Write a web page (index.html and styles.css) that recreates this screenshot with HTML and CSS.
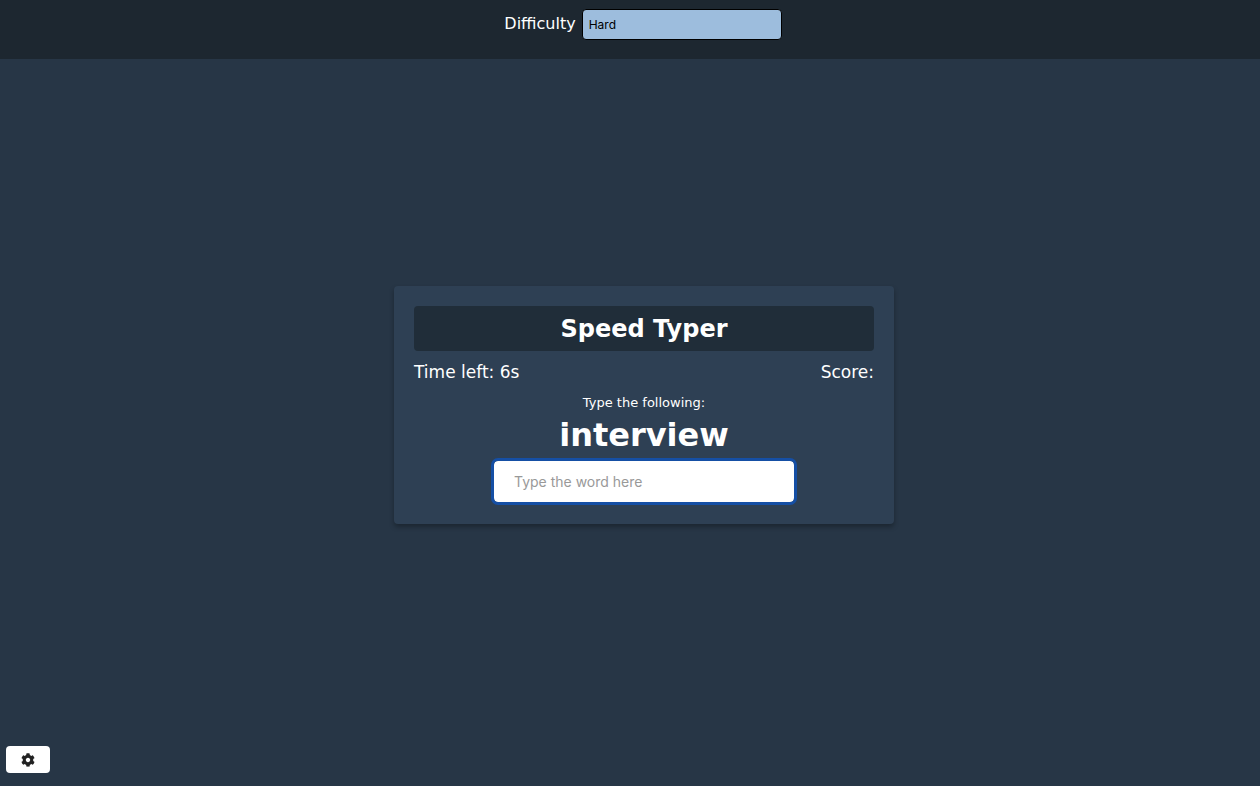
FILE: index.html
```
<!DOCTYPE html>
<html lang="en">
<head>
<meta charset="utf-8">
<title>Speed Typer</title>
<link rel="stylesheet" href="styles.css">
</head>
<body>
<header class="settings">
  <form class="settings-form">
    <label for="difficulty">Difficulty</label>
    <select id="difficulty" class="difficulty">
      <option>Easy</option>
      <option>Medium</option>
      <option selected>Hard</option>
    </select>
  </form>
</header>
<main class="stage">
  <section class="card">
    <h1 class="title">Speed Typer</h1>
    <div class="stats">
      <p class="stat">Time left: 6s</p>
      <p class="stat">Score:</p>
    </div>
    <label class="prompt" for="answer">Type the following:</label>
    <p class="word">interview</p>
    <input id="answer" class="answer" type="text" placeholder="Type the word here" autocomplete="off">
  </section>
</main>
<footer class="footer">
  <button class="settings-btn" type="button" aria-label="Settings">
    <svg class="gear" viewBox="0 0 512 512" aria-hidden="true"><path fill="currentColor" d="M487.4 315.7l-42.600-24.600c4.300-23.200 4.300-47 0-70.200l42.600-24.600c4.900-2.800 7.100-8.600 5.500-14-11.100-35.600-30-67.800-54.700-94.600-3.800-4.100-10-5.100-14.800-2.300L380.800 110c-17.900-15.400-38.500-27.300-60.800-35.100V25.800c0-5.600-3.900-10.500-9.400-11.700-36.700-8.200-74.300-7.800-109.200 0-5.500 1.200-9.400 6.100-9.400 11.700V75c-22.200 7.900-42.800 19.800-60.800 35.100L88.700 85.500c-4.900-2.800-11-1.900-14.800 2.300-24.700 26.700-43.600 58.900-54.700 94.600-1.700 5.400.6 11.200 5.500 14L67.300 221c-4.300 23.200-4.300 47 0 70.200l-42.600 24.600c-4.900 2.800-7.100 8.600-5.500 14 11.100 35.600 30 67.800 54.700 94.600 3.800 4.100 10 5.100 14.800 2.300l42.600-24.600c17.900 15.400 38.500 27.300 60.800 35.100v49.200c0 5.600 3.900 10.500 9.400 11.700 36.700 8.200 74.300 7.800 109.200 0 5.500-1.200 9.400-6.100 9.400-11.700v-49.200c22.200-7.900 42.800-19.800 60.800-35.100l42.600 24.600c4.900 2.800 11 1.900 14.800-2.300 24.700-26.700 43.600-58.900 54.700-94.600 1.500-5.500-.7-11.300-5.600-14.100zM256 336c-44.100 0-80-35.900-80-80s35.900-80 80-80 80 35.900 80 80-35.900 80-80 80z"/></svg>
  </button>
</footer>
</body>
</html>
```
FILE: styles.css
```
* { box-sizing: border-box; }

body {
  margin: 0;
  min-height: 100vh;
  display: flex;
  flex-direction: column;
  background: #273646;
  color: #fff;
  font-family: Verdana, "DejaVu Sans", sans-serif;
  font-size: 16px;
}

.settings {
  min-height: 59px;
  padding: 9px 0 19px 26px;
  background: #1d2730;
}

.settings-form {
  display: flex;
  justify-content: center;
  align-items: center;
  gap: 6px;
}

.settings-form label {
  line-height: 28px;
  padding-bottom: 2px;
}

.difficulty {
  appearance: none;
  width: 200px;
  height: 31px;
  padding: 0 6px;
  border: 1px solid #000;
  border-radius: 4px;
  background: #9dbddd;
  color: #000;
  font-family: Inter, sans-serif;
  font-size: 12px;
}

.stage {
  flex: 1;
  display: flex;
  justify-content: center;
  align-items: center;
  padding: 5px 0 0 28px;
}

.card {
  width: 500px;
  max-width: 100%;
  padding: 20px 20px 22px;
  display: flex;
  flex-direction: column;
  align-items: center;
  border-radius: 4px;
  background: #2e4054;
  box-shadow: 0 3px 5px rgba(0, 0, 0, 0.3);
}

.title {
  width: 100%;
  margin: 0;
  padding-top: 2px;
  border-radius: 4px;
  background: #202d39;
  font-size: 24px;
  line-height: 43px;
  text-align: center;
}

.stats {
  width: 100%;
  display: flex;
  justify-content: space-between;
  margin-top: 11px;
}

.stat {
  margin: 0;
  font-size: 17px;
  line-height: 20px;
}

.prompt {
  margin-top: 13px;
  font-size: 13px;
  line-height: 16px;
}

.word {
  margin: 3px 0 5px;
  font-size: 32px;
  font-weight: bold;
  line-height: 42px;
}

.answer {
  width: 300px;
  max-width: 100%;
  height: 41px;
  padding: 0 20px;
  border: 0;
  border-radius: 4px;
  outline: 3px solid #154fa5;
  background: #fff;
  color: #222;
  font-family: Inter, sans-serif;
  font-size: 14px;
}

.answer::placeholder { color: #999; }

.footer {
  display: flex;
  padding: 0 6px 13px;
}

.settings-btn {
  width: 44px;
  height: 27px;
  padding: 0;
  display: flex;
  justify-content: center;
  align-items: center;
  border: 0;
  border-radius: 4px;
  background: #fff;
  color: #222;
}

.gear {
  width: 14px;
  height: 14px;
}
```
